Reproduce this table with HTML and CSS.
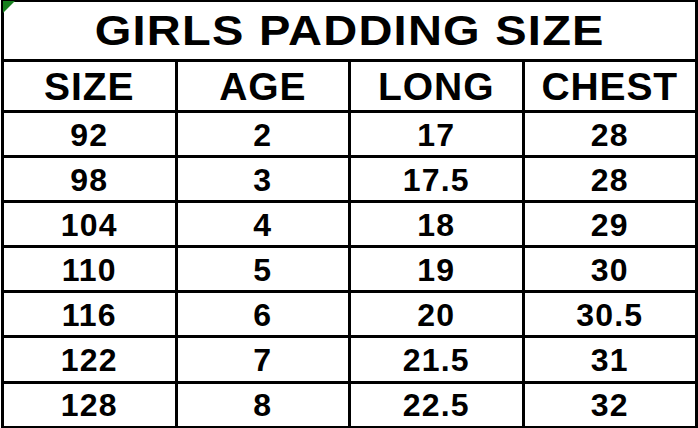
FILE: index.html
```html
<!DOCTYPE html>
<html>
<head>
<meta charset="utf-8">
<link rel="stylesheet" href="styles.css">
</head>
<body>
<div class="sheet">
  <span class="marker"></span>
  <table class="chart">
    <tr class="title-row"><th colspan="4" class="title"><span class="title-text">GIRLS PADDING SIZE</span></th></tr>
    <tr class="head-row"><th>SIZE</th><th>AGE</th><th>LONG</th><th>CHEST</th></tr>
    <tr><td>92</td><td>2</td><td>17</td><td>28</td></tr>
    <tr><td>98</td><td>3</td><td>17.5</td><td>28</td></tr>
    <tr><td>104</td><td>4</td><td>18</td><td>29</td></tr>
    <tr><td>110</td><td>5</td><td>19</td><td>30</td></tr>
    <tr><td>116</td><td>6</td><td>20</td><td>30.5</td></tr>
    <tr><td>122</td><td>7</td><td>21.5</td><td>31</td></tr>
    <tr><td>128</td><td>8</td><td>22.5</td><td>32</td></tr>
  </table>
</div>
</body>
</html>
```
FILE: styles.css
```css
html, body {
  margin: 0;
  padding: 0;
  background: #ffffff;
}
body {
  width: 698px;
  height: 428px;
  overflow: hidden;
}
.sheet {
  position: relative;
  padding-left: 1px;
  width: 697px;
  height: 428px;
}
.marker {
  position: absolute;
  left: 3px;
  top: 2px;
  width: 0;
  height: 0;
  border-top: 12px solid #17801f;
  border-right: 12px solid transparent;
}
.chart {
  border-collapse: collapse;
  width: 697px;
  table-layout: fixed;
  font-family: "Liberation Sans", Arial, sans-serif;
  font-weight: bold;
  color: #000;
  margin-top: -1px;
}
.chart th, .chart td {
  border: 3px solid #000;
  padding: 0;
  text-align: center;
  vertical-align: middle;
  line-height: 1;
}
.title-row { height: 60px; }
.title {
  font-size: 42px;
  padding-top: 3px;
}
.title-text {
  display: inline-block;
  letter-spacing: 1.1px;
  transform: scaleX(1.12);
}
.head-row { height: 51px; }
.head-row th {
  font-size: 39px;
  font-weight: bold;
  letter-spacing: 0.9px;
}
.chart td {
  height: 41.1px;
  font-size: 32px;
  letter-spacing: 1.2px;
  padding-top: 1px;
}
```
